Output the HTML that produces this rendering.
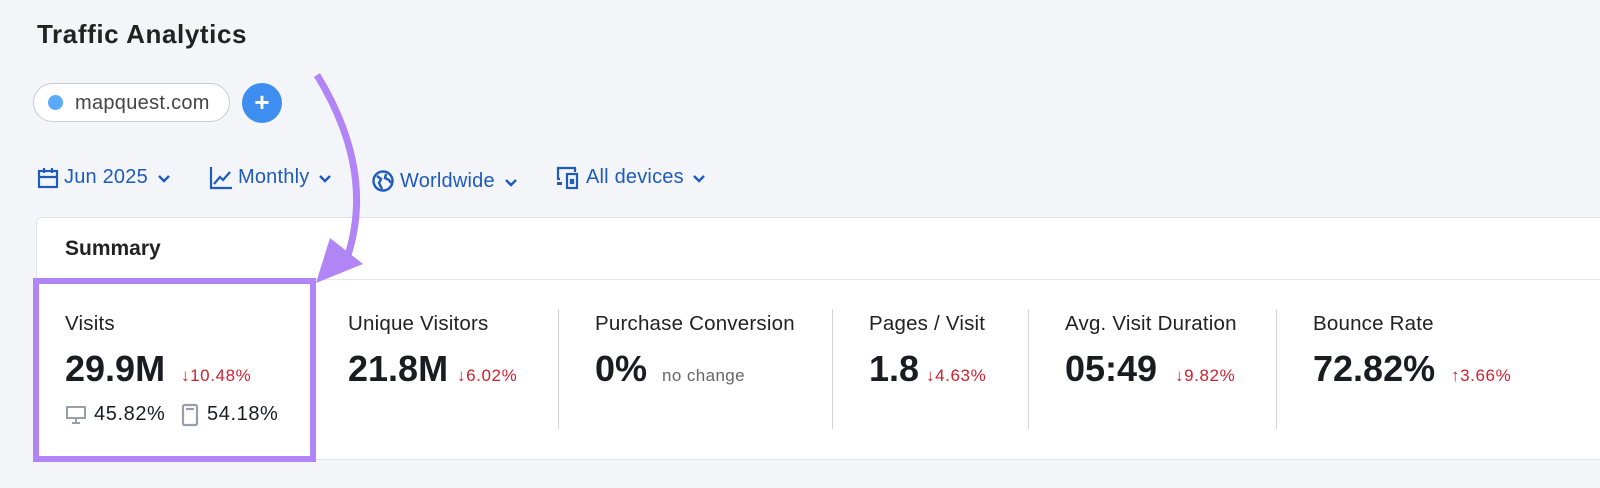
<!DOCTYPE html>
<html><head><style>
body{margin:0;width:1600px;height:488px;background:#f4f5f9;font-family:"Liberation Sans",sans-serif;position:relative;overflow:hidden;color:#1a1c22}
.a{position:absolute}
h1{position:absolute;left:37px;top:19px;margin:0;font-size:26px;font-weight:bold;color:#222;letter-spacing:0.6px}
.pill{left:33px;top:83px;width:197px;height:39px;border:1px solid #c9ccd3;border-radius:20px;background:#fff;box-sizing:border-box}
.pill span{position:absolute;left:41px;top:8px;font-size:20px;color:#444;letter-spacing:0.3px}
.dot{left:14px;top:11px;width:15px;height:15px;border-radius:50%;background:#5aaaf8}
.plus{left:242px;top:83px;width:40px;height:40px;border-radius:50%;background:#3d8ef0;color:#fff;font-size:26px;text-align:center;line-height:38px;font-weight:bold}
.f{top:166px;font-size:20px;color:#1d5bbf;letter-spacing:0.2px}
.card{left:36px;top:217px;width:1600px;height:241px;background:#fff;border:1px solid #e1e3e8;border-radius:6px}
.sum{left:65px;top:237px;font-size:21px;font-weight:bold;color:#222}
.sep{left:37px;top:279px;width:1600px;height:1px;background:#e6e7eb}
.lbl{top:312px;font-size:20.5px;color:#222;letter-spacing:0.2px}
.big{top:348px;font-size:36px;font-weight:bold;color:#1a1c22}
.chg{top:366px;font-size:17px;color:#d1202f;letter-spacing:0.6px}
.vl{top:309px;width:1px;height:120px;background:#d2d4d9}
.pc{top:403px;font-size:20px;letter-spacing:0.6px}
</style></head><body>
<h1>Traffic Analytics</h1>
<div class="a pill"><div class="a dot"></div><span>mapquest.com</span></div>
<div class="a plus">+</div>
<svg width="0" height="0" style="position:absolute"><defs><symbol id="chev" viewBox="0 0 14 10"><path d="M2 2L7 7L12 2" fill="none" stroke="#1d5bbf" stroke-width="2.4"/></symbol></defs></svg>
<svg class="a" style="left:37px;top:167px" width="22" height="22" viewBox="0 0 22 22" fill="none" stroke="#1d5bbf" stroke-width="2.2"><rect x="2" y="4" width="18" height="16"/><line x1="2" y1="10" x2="20" y2="10"/><line x1="7" y1="1" x2="7" y2="6"/><line x1="15" y1="1" x2="15" y2="6"/></svg>
<div class="a f" style="left:64px">Jun 2025</div>
<svg class="a" style="left:157px;top:174px" width="14" height="10"><use href="#chev"/></svg>
<svg class="a" style="left:209px;top:166px" width="24" height="24" viewBox="0 0 24 24" fill="none" stroke="#1d5bbf" stroke-width="2.2"><path d="M2 1V22H23M5 18L11 11L14 14L21 6"/></svg>
<div class="a f" style="left:238px">Monthly</div>
<svg class="a" style="left:318px;top:174px" width="14" height="10"><use href="#chev"/></svg>
<svg class="a" style="left:372px;top:170px" width="22" height="22" viewBox="0 0 22 22" fill="none" stroke="#1d5bbf" stroke-width="2.4"><circle cx="11" cy="11" r="9.5"/><path d="M5 6L9 9L7 13L10 19M14 4L13 8L17 10L19 13" /></svg>
<div class="a f" style="left:400px;top:170px">Worldwide</div>
<svg class="a" style="left:504px;top:178px" width="14" height="10"><use href="#chev"/></svg>
<svg class="a" style="left:556px;top:166px" width="26" height="24" viewBox="0 0 26 24" fill="none" stroke="#1d5bbf" stroke-width="2.2"><path d="M4 13H2V2H19V6"/><rect x="11" y="8" width="10" height="14"/><rect x="15" y="14" width="2" height="3" fill="#1d5bbf"/><rect x="1" y="16" width="5" height="3" fill="#1d5bbf" stroke="none"/></svg>
<div class="a f" style="left:586px">All devices</div>
<svg class="a" style="left:692px;top:174px" width="14" height="10"><use href="#chev"/></svg>
<div class="a card"></div>
<div class="a sum">Summary</div>
<div class="a sep"></div>
<div class="a lbl" style="left:65px">Visits</div>
<div class="a big" style="left:65px">29.9M</div>
<div class="a chg" style="left:181px">↓10.48%</div>
<svg class="a" style="left:66px;top:405px" width="20" height="20" viewBox="0 0 20 20" fill="none" stroke="#9a9ea8" stroke-width="2"><rect x="1" y="2" width="18" height="11"/><path d="M10 13V17M6 18H14"/></svg>
<div class="a pc" style="left:94px">45.82%</div>
<svg class="a" style="left:181px;top:403px" width="18" height="24" viewBox="0 0 18 24" fill="none" stroke="#9a9ea8" stroke-width="2.2"><rect x="2" y="2" width="14" height="20" rx="1.5"/><line x1="5" y1="6" x2="13" y2="6"/></svg>
<div class="a pc" style="left:207px">54.18%</div>
<div class="a lbl" style="left:348px">Unique Visitors</div>
<div class="a big" style="left:348px">21.8M</div>
<div class="a chg" style="left:457px">↓6.02%</div>
<div class="a vl" style="left:558px"></div>
<div class="a lbl" style="left:595px">Purchase Conversion</div>
<div class="a big" style="left:595px">0%</div>
<div class="a" style="left:662px;top:366px;font-size:17px;color:#666;letter-spacing:0.4px">no change</div>
<div class="a vl" style="left:832px"></div>
<div class="a lbl" style="left:869px">Pages / Visit</div>
<div class="a big" style="left:869px">1.8</div>
<div class="a chg" style="left:926px">↓4.63%</div>
<div class="a vl" style="left:1028px"></div>
<div class="a lbl" style="left:1065px">Avg. Visit Duration</div>
<div class="a big" style="left:1065px">05:49</div>
<div class="a chg" style="left:1175px">↓9.82%</div>
<div class="a vl" style="left:1276px"></div>
<div class="a lbl" style="left:1313px">Bounce Rate</div>
<div class="a big" style="left:1313px">72.82%</div>
<div class="a chg" style="left:1451px">↑3.66%</div>
<div class="a" style="left:33px;top:278px;width:283px;height:184px;border:6px solid #b185f5;box-sizing:border-box"></div>
<svg class="a" style="left:0;top:0" width="1600" height="488"><path d="M317 75Q375 170 348 255" fill="none" stroke="#b185f5" stroke-width="7"/><polygon points="330,238 363,264 316,283" fill="#b185f5"/></svg>
</body></html>
